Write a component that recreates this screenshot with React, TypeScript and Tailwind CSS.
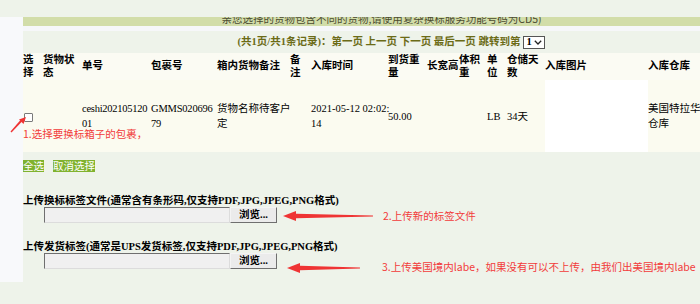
import React from "react";

const serif = "font-['Liberation_Serif','Noto_Sans_CJK_SC',serif]";
const sans = "font-['Noto_Sans_CJK_SC','Liberation_Sans',sans-serif]";

function FileBox() {
  return (
    <div className="ml-[21px] flex h-[16px] w-[233px]">
      <div className="h-full w-[186px] border border-t-[#6f6f6f] border-l-[#6f6f6f] border-b-[#dcdcdc] border-r-[#dcdcdc] bg-[#f0f0f0]" />
      <div className="flex h-full w-[47px] items-center justify-center border border-t-[#f4f4f4] border-l-[#f4f4f4] border-b-[#6f6f6f] border-r-[#6f6f6f] bg-[#ebebeb] text-[10.5px] font-bold leading-none text-black">
        浏览...
      </div>
    </div>
  );
}

export default function App() {
  const th = "p-0 text-left align-middle font-bold leading-[12.5px] text-black whitespace-nowrap";
  const td = "p-0 text-left align-middle leading-[15px] text-black whitespace-nowrap";
  return (
    <div className={`relative h-[304px] w-[700px] overflow-hidden bg-[#eef3ea] text-[10.5px] ${serif}`}>
      <div className="h-[17px]" />
      <div className="flex h-[265px]">
        <div className="w-[23px] shrink-0 bg-[#f8f9fb]" />
        <div className="min-w-0 flex-1">
          {/* notice bar (top half clipped) */}
          <div className="h-[9px] overflow-hidden bg-[#d2dda9]">
            <div className={`-mt-[5px] pl-[40px] text-center text-[10.5px] leading-[14px] text-[#4b4b30] ${sans}`}>
              亲您选择的货物包含不同的货物,请使用复杂换标服务功能号码为CD5)
            </div>
          </div>
          <div className="h-[5px] bg-[#f6f7f9]" />
          {/* pagination */}
          <div className="flex h-[22px] items-center justify-center pl-[60px] font-bold text-[#6b6b16]">
            <span>(共1页/共1条记录)：第一页 上一页 下一页 最后一页 跳转到第</span>
            <span className="ml-[3px] flex h-[13px] w-[22px] items-center justify-between border border-[#555] bg-white pl-[2px] pr-[2px] text-black">
              <span className="leading-none">1</span>
              <svg width="8" height="5" viewBox="0 0 8 5">
                <path d="M0.8 0.8 L4 4 L7.2 0.8" fill="none" stroke="#222" strokeWidth="1.3" />
              </svg>
            </span>
          </div>
          {/* table */}
          <table className="w-[688px] table-fixed border-collapse">
            <colgroup>
              <col className="w-[20px]" />
              <col className="w-[39px]" />
              <col className="w-[69px]" />
              <col className="w-[66px]" />
              <col className="w-[73px]" />
              <col className="w-[21px]" />
              <col className="w-[77px]" />
              <col className="w-[39px]" />
              <col className="w-[32px]" />
              <col className="w-[28px]" />
              <col className="w-[20px]" />
              <col className="w-[38px]" />
              <col className="w-[103px]" />
              <col className="w-[63px]" />
            </colgroup>
            <thead>
              <tr className="h-[27px] bg-[#fbfbf3]">
                <th className={th}>选<br />择</th>
                <th className={th}>货物状<br />态</th>
                <th className={th}>单号</th>
                <th className={th}>包裹号</th>
                <th className={th}>箱内货物备注</th>
                <th className={th}>备<br />注</th>
                <th className={th}>入库时间</th>
                <th className={th}>到货重<br />量</th>
                <th className={th}>长宽高</th>
                <th className={th}>体积<br />重</th>
                <th className={th}>单<br />位</th>
                <th className={th}>仓储天<br />数</th>
                <th className={th}>入库图片</th>
                <th className={th}>入库仓库</th>
              </tr>
            </thead>
            <tbody>
              <tr className="h-[72px] bg-[#fbfbf0]">
                <td className={td}>
                  <span className="ml-[1px] mt-[2px] block h-[9px] w-[9px] rounded-[1px] border border-[#7a7a7a] bg-white" />
                </td>
                <td className={td}></td>
                <td className={`${td} tracking-[-0.25px]`}>ceshi202105120<br />01</td>
                <td className={`${td} tracking-[-0.2px]`}>GMMS020696<br />79</td>
                <td className={td}>货物名称待客户<br />定</td>
                <td className={td}></td>
                <td className={td}>2021-05-12 02:02:<br />14</td>
                <td className={td}>50.00</td>
                <td className={td}></td>
                <td className={td}></td>
                <td className={td}>LB</td>
                <td className={td}>34天</td>
                <td className={`${td} bg-white`}></td>
                <td className={td}>美国特拉华州<br />仓库</td>
              </tr>
            </tbody>
          </table>
          {/* buttons */}
          <div className={`mt-[8px] flex gap-[9px] ${sans}`}>
            <span className="flex h-[12px] w-[21px] items-center justify-center bg-[#80b22e] text-[10.5px] leading-none text-white">全选</span>
            <span className="flex h-[12px] w-[42px] items-center justify-center bg-[#80b22e] text-[10.5px] leading-none text-white">取消选择</span>
          </div>
          {/* upload 1 */}
          <div className="mt-[22px] font-bold leading-[13px] text-black">
            上传换标标签文件(通常含有条形码,仅支持PDF,JPG,JPEG,PNG格式)
          </div>
          <FileBox />
          {/* upload 2 */}
          <div className="mt-[17px] font-bold leading-[13px] text-black">
            上传发货标签(通常是UPS发货标签,仅支持PDF,JPG,JPEG,PNG格式)
          </div>
          <FileBox />
        </div>
      </div>

      {/* annotations */}
      <div className={`absolute left-[23px] top-[128px] text-[10.5px] leading-[12px] text-[#f23b3b] ${sans}`}>
        1.选择要换标箱子的包裹，
      </div>
      <svg className="absolute left-0 top-0" width="700" height="304" viewBox="0 0 700 304">
        <g fill="#ef3434" stroke="none">
          <path d="M10.5 131.5 L11.5 132.5 L22 121.5 L20.5 120 Z" />
          <path d="M26 117 L19 119.5 L23.5 124 Z" />
          <path d="M373 215.5 L373 216.5 L296 218.2 L296 213.8 Z" />
          <path d="M283 216 L296 211 L296 221 Z" />
          <path d="M360 267.5 L360 268.5 L300 270.2 L300 265.8 Z" />
          <path d="M287 268 L300 263 L300 273 Z" />
        </g>
      </svg>
      <div className={`absolute left-[383px] top-[209px] text-[10.5px] leading-[14px] text-[#f23b3b] ${sans}`}>
        2.上传新的标签文件
      </div>
      <div className={`absolute left-[382px] top-[260px] whitespace-nowrap text-[10.5px] leading-[14px] text-[#f23b3b] ${sans}`}>
        3.上传美国境内labe，如果没有可以不上传，由我们出美国境内labe
      </div>
    </div>
  );
}
